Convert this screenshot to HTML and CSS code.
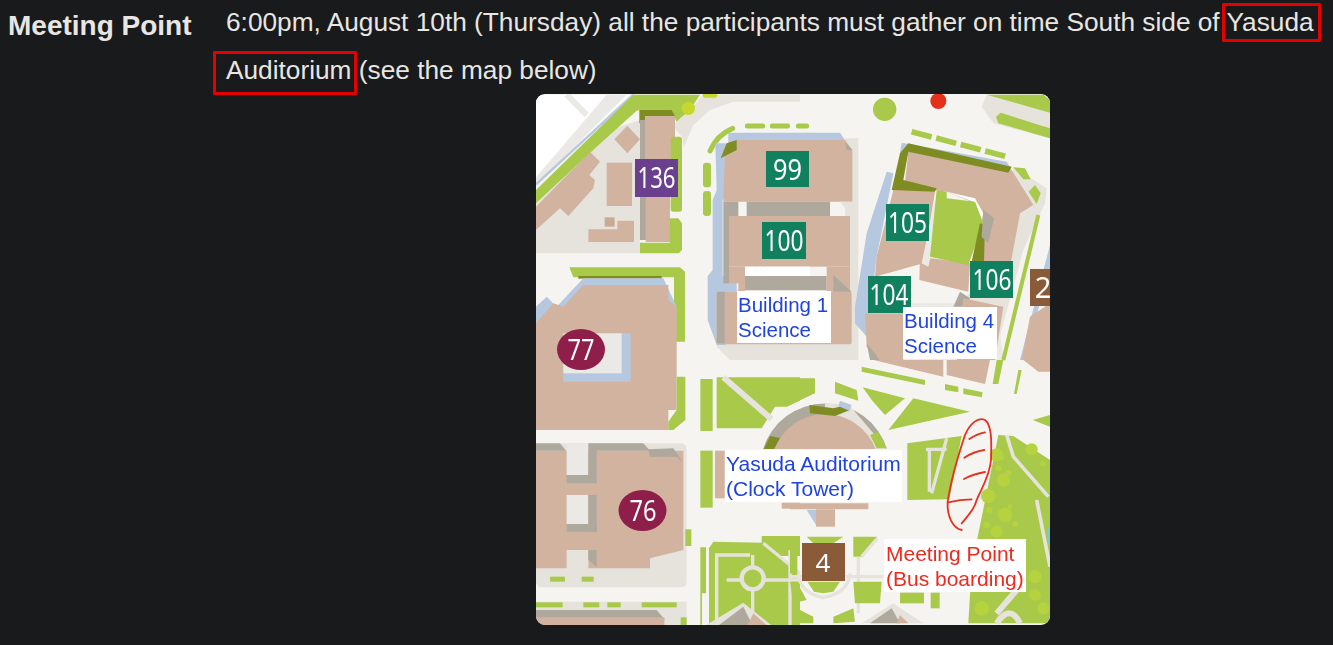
FILE: index.html
```html
<!DOCTYPE html>
<html lang="en">
<head>
<meta charset="utf-8">
<title>Meeting Point</title>
<link rel="stylesheet" href="styles.css">
</head>
<body>
<main class="row">
  <h2 class="label">Meeting Point</h2>
  <div class="desc">
    <p class="text">6:00pm, August 10th (Thursday) all the participants must gather on time South side of <span class="mark mark-a">Yasuda</span> <span class="mark mark-b">Auditorium</span> (see the map below)</p>
    <svg class="map" viewBox="536 94 514 531" role="img" aria-label="Campus map">
      <rect class="road" x="536" y="94" width="514" height="531"/>
      <g class="shapes">
        <!-- top-left quadrant, drawn in 3x units -->
        <g transform="translate(530 90) scale(.33333)">
          <polygon class="white" points="18,14 300,14 18,280"/>
          <polygon class="plaza-l" points="18,262 230,14 290,14 18,285"/>
          <path class="plaza-line" d="M110,14 L170,75"/>
          <path class="blue-line" d="M18,283 L310,14"/>
          <polygon class="plaza" points="18,340 240,120 330,90 330,490 18,490"/>
          <polygon class="grass" points="18,300 310,14 510,14 480,60 440,95 430,75 330,60 320,62 200,170 18,340"/>
          <polygon class="plaza" points="520,14 810,14 810,35 610,35 540,60 490,105 462,170 456,140 430,110 440,95 480,60"/>
          <polygon class="olive" points="328,60 425,60 435,78 345,78 345,100 328,100"/>
          <rect class="shade" x="330" y="90" width="20" height="360"/>
          <rect class="bldg" x="345" y="78" width="90" height="140"/>
          <rect class="bldg" x="347" y="310" width="73" height="146"/>
          <rect class="grass" x="422" y="140" width="34" height="225" rx="8"/>
          <polygon class="grass" points="420,385 445,385 456,400 456,480 446,490 330,490 330,458 420,458"/>
          <polygon class="bldg" points="292,107 330,148 292,190 253,148"/>
          <rect class="bldg" x="230" y="218" width="76" height="130"/>
          <polygon class="bldg" points="18,350 180,185 210,215 178,255 195,270 190,295 115,378 90,355 18,420"/>
          <polygon class="bldg" points="175,418 262,418 262,392 312,392 312,456 175,456"/>
          <rect class="bldg-d" x="224" y="382" width="30" height="28"/>
          <circle class="lime" cx="475" cy="55" r="20"/>
          <path class="lime-line" d="M525,16 L555,16"/>
          <path class="grass-line" d="M540,183 Q560,135 608,115"/>
          <path class="grass-line" d="M652,108 H698 M727,108 H773 M805,108 H830"/>
          <rect class="grass" x="519" y="218" width="24" height="74" rx="10"/>
          <rect class="grass" x="519" y="303" width="24" height="75" rx="10"/>

          <polygon class="plaza" points="945,145 985,145 985,810 600,810 560,770 560,600 945,600"/>
          <polygon class="blue" points="595,128 930,128 945,150 620,150 585,190 590,310 578,330 578,540 578,558 620,558 620,605 560,605 560,745 590,765 560,765 533,690 533,558 548,540 548,330 560,300 556,160 595,160"/>
          <polygon class="bldg" points="585,190 620,150 945,150 967,180 967,335 580,335"/>
          <polygon class="shade" points="945,155 967,180 950,180"/>
          <polygon class="olive" points="572,205 590,160 620,150 620,180"/>
          <rect class="shade" x="580" y="335" width="45" height="43"/>
          <rect class="shade" x="650" y="335" width="250" height="43"/>
          <polygon class="plaza" points="930,335 965,335 965,378"/>
          <rect class="bldg" x="597" y="378" width="363" height="152"/>
          <rect class="shade" x="580" y="378" width="17" height="202"/>
          <rect class="bldg" x="597" y="530" width="48" height="50"/>
          <rect class="white" x="645" y="530" width="195" height="28"/>
          <rect class="shade" x="645" y="558" width="245" height="42"/>
          <rect class="bldg" x="625" y="530" width="20" height="75"/>
          <rect class="bldg" x="890" y="530" width="70" height="75"/>
          <rect class="bldg" x="560" y="605" width="405" height="158" rx="6"/>
          <rect class="shade" x="560" y="605" width="24" height="155"/>
          <polygon class="shade" points="910,555 965,605 910,605"/>

          <polygon class="grass" points="118,532 450,532 465,545 465,755 432,755 432,562 130,562"/>
          <rect class="olive" x="145" y="558" width="250" height="8"/>
          <polygon class="blue" points="18,650 50,620 80,650 160,565 400,565 440,650 18,760"/>
          <polygon class="bldg" points="160,585 415,585 415,630 440,650 440,810 18,810 18,700 70,640 100,650"/>
          <rect class="blue" x="100" y="730" width="202" height="80"/>
          <rect class="plaza-l" x="100" y="730" width="175" height="80"/>
        </g>

        <!-- top-right quadrant -->
        <g transform="translate(790 90) scale(.33333)">
          <circle class="grass" cx="284" cy="58" r="35"/>
          <circle class="red-dot" cx="445" cy="33" r="24"/>
          <polygon class="plaza" points="590,14 780,14 780,145 610,100 575,50"/>
          <polygon class="grass" points="590,14 760,14 780,30 780,68"/>
          <polygon class="grass" points="632,68 780,115 780,145 625,100 618,80"/>
          <path class="grass-dash" d="M365,125 L650,200"/>
          <polygon class="plaza" points="670,230 770,295 765,340 700,480 610,810 480,810 500,650 640,500"/>
          <polygon class="blue" points="290,245 310,250 260,500 230,740 195,700 195,650 230,430"/>
          <polygon class="blue" points="335,158 650,215 665,240 330,190"/>
          <polygon class="bldg" points="355,185 665,240 730,345 690,370 650,585 540,560 580,400 555,340 470,305 435,300 345,275"/>
          <polygon class="bldg" points="315,280 435,305 400,520 255,560 260,500"/>
          <polygon class="bldg" points="390,500 540,520 535,605 388,570"/>
          <polygon class="plaza-l" points="435,330 460,335 415,530 395,520"/>
          <polygon class="white" points="470,305 555,325 580,370 575,395 550,335"/>
          <polygon class="olive" points="330,190 355,160 665,230 655,248 355,185 340,270 440,295 435,305 305,300"/>
          <polygon class="grass" points="440,300 470,305 470,325 555,335 580,400 535,525 420,500"/>
          <polygon class="olive" points="570,400 585,405 582,515 545,515"/>
          <polygon class="shade" points="580,360 612,385 595,460 575,440"/>
          <polygon class="grass" points="670,232 705,235 722,268 700,268"/>
          <polygon class="grass" points="735,285 752,310 740,342 716,305"/>
          <polygon class="plaza-l" points="355,640 620,640 640,810 340,810"/>
          <polygon class="shade" points="510,605 540,625 530,650 490,650"/>
          <polygon class="bldg" points="520,625 640,650 615,810 500,810"/>
          <polygon class="bldg" points="225,670 340,670 340,810 270,810 230,770"/>
          <polygon class="shade" points="230,760 270,810 240,810"/>
          <path class="grass-thick" d="M745,375 L640,810"/>
          <polygon class="blue" points="780,465 780,540 700,810 690,810"/>
          <polygon class="bldg" points="780,640 780,810 695,810 720,680"/>
        </g>

        <!-- bottom-left quadrant -->
        <g transform="translate(530 360) scale(.33333)">
          <polygon class="bldg" points="18,0 440,0 440,150 415,150 415,210 18,210"/>
          <rect class="blue" x="100" y="0" width="202" height="65"/>
          <rect class="plaza-l" x="100" y="0" width="175" height="40"/>
          <polygon class="grass" points="440,50 466,50 466,180 430,210 415,210 415,185 440,150"/>
          <rect class="plaza" x="18" y="250" width="452" height="432" rx="16"/>
          <polygon class="bldg" points="18,272 460,272 460,570 360,595 360,625 18,625"/>
          <rect class="plaza-l" x="110" y="250" width="65" height="95"/>
          <rect class="shade" x="110" y="345" width="90" height="25"/>
          <polygon class="shade" points="175,250 340,250 360,272 200,272 200,345 175,345"/>
          <polygon class="shade" points="18,250 90,250 108,272 18,272"/>
          <polygon class="shade" points="355,268 430,265 460,310 440,290 360,290"/>
          <rect class="plaza-l" x="110" y="405" width="65" height="87"/>
          <rect class="shade" x="175" y="405" width="25" height="110"/>
          <rect class="shade" x="110" y="492" width="90" height="23"/>
          <rect class="plaza" x="110" y="570" width="65" height="58"/>
          <polygon class="shade" points="175,570 200,570 200,622 175,600"/>
          <rect class="grass" x="60" y="650" width="45" height="15"/>
          <rect class="grass" x="155" y="650" width="36" height="15"/>
          <rect class="plaza" x="18" y="725" width="452" height="80"/>
          <rect class="grass" x="18" y="727" width="80" height="15"/>
          <rect class="grass" x="160" y="727" width="48" height="15"/>
          <rect class="grass" x="232" y="727" width="40" height="15"/>
          <rect class="grass" x="335" y="727" width="105" height="15"/>
          <polygon class="shade" points="18,750 380,750 405,780 18,780"/>
          <rect class="bldg" x="18" y="772" width="385" height="30"/>
          <rect class="grass" x="452" y="772" width="18" height="30"/>
          <rect class="grass" x="466" y="508" width="18" height="50"/>
          <rect class="grass" x="511" y="57" width="37" height="156"/>
          <polygon class="grass" points="560,52 810,52 810,140 735,140 695,205 560,205"/>
          <path class="plaza-thick" d="M580,52 L725,178"/>
          <rect class="grass" x="511" y="272" width="37" height="171"/>
          <rect class="bldg" x="555" y="272" width="29" height="143"/>
          <rect class="bldg" x="755" y="428" width="55" height="18"/>
          <polygon class="grass" points="511,562 528,562 528,700 516,700 516,790 511,800"/>
          <polygon class="grass" points="537,565 550,545 700,548 810,640 810,800 537,800"/>
          <rect class="grass" x="695" y="528" width="115" height="60"/>
          <path class="plaza-path" d="M560,800 V585 H660 M590,660 H640 M700,660 H810 M668,620 V585 M668,690 V760 M700,550 L810,640 M780,570 V800"/>
          <circle class="ring" cx="668" cy="655" r="33"/>
          <polygon class="plaza" points="520,800 640,728 730,800"/>
          <polygon class="shade" points="560,800 640,740 670,800"/>
          <polygon class="bldg" points="650,800 670,760 715,800"/>
        </g>

        <!-- clock tower -->
        <path class="road" d="M755.600,449 A72 72 0 0 1 894.400,449 Z"/>
        <path class="shade" d="M763,449 A65 65 0 0 1 887,449 Z"/>
        <polygon class="plaza" points="825,403 850,406 887,449 825,449"/>
        <path class="bldg" d="M774.500,449 A54 54 0 0 1 875.500,449 Z"/>
        <polygon class="olive" points="764,449 770,436 780,438 774,449"/>

        <!-- bottom-right quadrant -->
        <g transform="translate(790 360) scale(.33333)">
          <polygon class="olive" points="58,135 130,145 170,135 180,150 135,168 60,160"/>
          <polygon class="blue" points="150,122 185,135 178,152 145,138"/>
          <polygon class="grass" points="0,55 75,55 75,100 0,135"/>
          <polygon class="grass" points="135,65 200,90 205,122 135,100"/>
          <polygon class="grass" points="218,82 345,115 285,165 245,120"/>
          <polygon class="grass" points="295,210 370,115 540,155"/>
          <polygon class="grass" points="240,225 265,215 290,265 260,265"/>
          <polygon class="grass" points="215,20 405,60 405,75 215,35"/>
          <polygon class="bldg" points="250,0 460,0 460,50"/>
          <polygon class="bldg" points="470,0 600,0 585,72 470,45"/>
          <polygon class="grass" points="465,72 505,80 505,97 465,90"/>
          <polygon class="grass" points="520,85 578,97 575,112 520,102"/>
          <polygon class="grass" points="620,0 640,0 625,72 608,72"/>
          <polygon class="grass" points="685,30 695,30 680,102 672,102"/>
          <polygon class="bldg" points="700,0 780,0 780,35 745,35"/>
          <polygon class="grass" points="728,180 780,165 780,200"/>
          <polygon class="grass" points="352,250 515,228 478,418 352,420"/>
          <path class="plaza-path" d="M408,268 H470 M418,268 V395 M470,235 L425,400"/>
          <polygon class="grass" points="625,225 670,228 780,300 780,790 535,790 545,620"/>
          <path class="plaza-thin" d="M650,225 L670,290 L775,410 M740,420 L780,620"/>
          <g class="foliage">
            <circle cx="620" cy="285" r="20"/><circle cx="725" cy="268" r="18"/><circle cx="640" cy="360" r="20"/>
            <circle cx="595" cy="408" r="22"/><circle cx="645" cy="465" r="22"/><circle cx="625" cy="325" r="9"/>
            <circle cx="655" cy="340" r="9"/><circle cx="598" cy="450" r="9"/><circle cx="675" cy="492" r="9"/>
            <circle cx="590" cy="495" r="10"/><circle cx="620" cy="515" r="18"/><circle cx="735" cy="650" r="20"/>
            <circle cx="735" cy="705" r="18"/><circle cx="575" cy="745" r="22"/><circle cx="760" cy="745" r="18"/>
            <circle cx="635" cy="295" r="7"/><circle cx="758" cy="310" r="8"/><circle cx="660" cy="440" r="7"/>
          </g>
          <ellipse class="water" cx="782" cy="525" rx="10" ry="30"/>
          <path class="plaza-thick" d="M620,790 Q660,730 690,790 M680,690 L620,760"/>
          <polygon class="bldg" points="0,430 235,430 235,448 0,448"/>
          <rect class="bldg" x="78" y="448" width="57" height="52"/>
          <polygon class="blue" points="50,450 78,450 78,495"/>
          <polygon class="grass" points="0,530 22,530 22,640 0,640"/>
          <polygon class="grass" points="50,530 160,530 130,550 70,550"/>
          <polygon class="grass" points="190,530 262,530 220,590 190,590"/>
          <path class="plaza-path" d="M25,640 Q30,700 100,712 Q175,700 180,640 M0,650 H36 M166,650 H280 M205,590 V760 M262,535 L215,590"/>
          <polygon class="grass" points="52,665 150,665 130,695 100,700 72,695"/>
          <polygon class="grass" points="0,665 20,665 50,720 10,730"/>
          <polygon class="grass" points="190,665 275,665 270,730 195,730"/>
          <polygon class="grass" points="20,745 70,770 70,790 10,790"/>
          <polygon class="grass" points="130,770 190,745 195,785 130,790"/>
          <polygon class="grass" points="330,698 402,698 402,730 330,730"/>
          <rect class="grass" x="422" y="698" width="27" height="47"/>
          <polygon class="plaza" points="215,790 310,730 400,790"/>
          <polygon class="shade" points="240,790 305,745 330,790"/>
          <polygon class="bldg" points="320,790 330,765 355,790"/>
        </g>
      </g>

      <!-- badges -->
      <rect class="purple" x="635" y="159" width="43" height="38"/>
      <rect class="teal" x="766" y="151" width="43" height="36"/>
      <rect class="teal" x="762" y="222" width="44" height="37"/>
      <rect class="teal" x="886" y="204" width="43" height="37"/>
      <rect class="teal" x="868" y="276" width="43" height="37"/>
      <rect class="teal" x="970" y="261" width="43" height="37"/>
      <rect class="brown" x="1030" y="269" width="20" height="37"/>
      <rect class="brown" x="802" y="543" width="43" height="38"/>
      <ellipse class="maroon" cx="581" cy="349.500" rx="24" ry="20.500"/>
      <ellipse class="maroon" cx="642.500" cy="510.500" rx="24" ry="20.500"/>
      <text class="num" x="656.500" y="188" textLength="38" lengthAdjust="spacingAndGlyphs">136</text>
      <text class="num" x="787.500" y="180" textLength="29" lengthAdjust="spacingAndGlyphs">99</text>
      <text class="num" x="784" y="251" textLength="39" lengthAdjust="spacingAndGlyphs">100</text>
      <text class="num" x="907.500" y="233" textLength="39" lengthAdjust="spacingAndGlyphs">105</text>
      <text class="num" x="889" y="305" textLength="39" lengthAdjust="spacingAndGlyphs">104</text>
      <text class="num" x="992" y="290" textLength="39" lengthAdjust="spacingAndGlyphs">106</text>
      <text class="num" x="1043" y="298">2</text>
      <text class="num" x="581" y="360" textLength="27" lengthAdjust="spacingAndGlyphs">77</text>
      <text class="num" x="643" y="521" textLength="27" lengthAdjust="spacingAndGlyphs">76</text>
      <text class="num-small" x="823" y="572">4</text>

      <!-- labels -->
      <rect class="white" x="737" y="291" width="94" height="52"/>
      <text class="note-sm blue-text" x="738" y="312">Building 1</text>
      <text class="note-sm blue-text" x="738" y="337">Science</text>
      <rect class="white" x="903" y="307" width="94" height="52"/>
      <text class="note-sm blue-text" x="904" y="328">Building 4</text>
      <text class="note-sm blue-text" x="904" y="353">Science</text>
      <rect class="white" x="725" y="450" width="177" height="52"/>
      <text class="note blue-text" x="726" y="471">Yasuda Auditorium</text>
      <text class="note blue-text" x="726" y="496">(Clock Tower)</text>
      <rect class="white" x="884" y="539" width="142" height="53"/>
      <text class="note red-text" x="886" y="561">Meeting Point</text>
      <text class="note red-text" x="886" y="586">(Bus boarding)</text>

      <!-- hand-drawn boarding zone -->
      <g transform="translate(790 360) scale(.33333)">
        <path class="sketch" d="M515,510 C490,505 470,470 473,425 C480,380 500,300 525,225 C540,190 565,170 585,180 C605,195 605,240 603,300 C600,345 575,385 560,420 C555,440 545,455 515,490 M538,237 Q560,222 585,217 M523,293 Q550,275 583,270 M522,357 Q550,342 585,336 M475,427 Q510,418 545,418"/>
      </g>
    </svg>
  </div>
</main>
</body>
</html>
```

FILE: styles.css
```css
html, body {
  margin: 0;
  background: #181a1b;
}
body {
  padding-left: 8px;
  color: #e8e6e3;
  font-family: "Liberation Sans", Arial, sans-serif;
}
.row {
  display: flex;
  align-items: flex-start;
}
.label {
  flex: 0 0 218px;
  margin: 0;
  padding-top: 11px;
  font-size: 28px;
  line-height: 30px;
  font-weight: 700;
}
.desc {
  flex: 1;
  min-width: 0;
}
.text {
  margin: -2px 0 0;
  font-size: 26.250px;
  line-height: 48px;
}
.mark {
  position: relative;
}
.mark::after {
  content: "";
  position: absolute;
  border: 3px solid #e30000;
  border-radius: 1px;
  box-sizing: border-box;
}
.mark-a::after {
  left: -5px;
  right: -7px;
  top: -4px;
  bottom: -5px;
}
.mark-b::after {
  left: -13px;
  right: -6px;
  top: -4px;
  bottom: -10px;
}
.map {
  display: block;
  width: 514px;
  height: 531px;
  margin-left: 310px;
  border-radius: 9px;
}
.shapes { filter: blur(.5px); }

.road { fill: #f6f4f0; }
.white { fill: #fff; }
.plaza { fill: #e6e3dd; }
.plaza-l { fill: #ebe9e5; }
.bldg { fill: #d2b39f; }
.bldg-d { fill: #c9aa92; }
.grass { fill: #a8c94a; }
.olive { fill: #7f8c22; }
.blue { fill: #b6c7e0; }
.shade { fill: #aea89d; }
.lime { fill: #c6d72e; }
.red-dot { fill: #e5301a; }
.water { fill: #7ec3e6; }
.foliage { fill: #b6d23f; }
.purple { fill: #693f8e; }
.teal { fill: #11805f; }
.brown { fill: #8a5b38; }
.maroon { fill: #8e1f4b; }

.plaza-line, .plaza-thick, .plaza-thin, .plaza-path, .ring, .blue-line,
.lime-line, .grass-line, .grass-dash, .grass-thick, .sketch {
  fill: none;
}
.plaza-line { stroke: #ebe9e5; stroke-width: 18px; }
.plaza-thick { stroke: #e6e3dd; stroke-width: 18px; }
.plaza-thin { stroke: #e6e3dd; stroke-width: 11px; }
.plaza-path { stroke: #e6e3dd; stroke-width: 10px; }
.ring { stroke: #e6e3dd; stroke-width: 13px; }
.blue-line { stroke: #b6c7e0; stroke-width: 7px; }
.lime-line { stroke: #c6d72e; stroke-width: 14px; stroke-linecap: round; }
.grass-line { stroke: #a8c94a; stroke-width: 15px; stroke-linecap: round; }
.grass-dash { stroke: #a8c94a; stroke-width: 17px; stroke-dasharray: 62 14; }
.grass-thick { stroke: #a8c94a; stroke-width: 12px; }
.sketch { stroke: #e8301f; stroke-width: 5.500px; stroke-linecap: round; }

.num, .num-small {
  fill: #fff;
  font-family: "Noto Sans", sans-serif;
  text-anchor: middle;
}
.num { font-size: 29px; }
.num-small { font-size: 26px; }
.note, .note-sm {
  font-family: "Liberation Sans", Arial, sans-serif;
}
.note { font-size: 21px; }
.note-sm { font-size: 20.500px; }
.blue-text { fill: #1f43e0; }
.red-text { fill: #ec2b20; }
```
